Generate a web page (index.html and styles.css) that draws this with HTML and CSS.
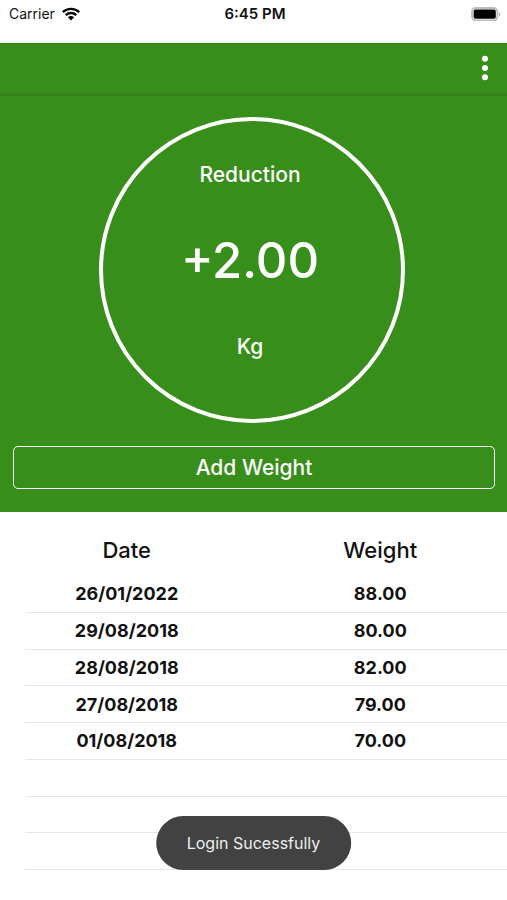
FILE: index.html
```html
<!DOCTYPE html>
<html lang="en">
<head>
<meta charset="utf-8">
<meta name="viewport" content="width=device-width, initial-scale=1">
<title>Weight</title>
<link rel="stylesheet" href="styles.css">
</head>
<body>
<header class="status">
  <div class="carrier">
    <span>Carrier</span>
    <svg class="wifi" viewBox="0 0 18 14" aria-hidden="true">
      <path d="M.8 5.1C5.3.8 12.7.8 17.2 5.1M3.7 8.1c3-2.8 7.6-2.8 10.6 0" fill="none" stroke="#000" stroke-width="2.3"/>
      <path d="M5.9 10.2c1.8-1.6 4.4-1.6 6.2 0L9 13.4z"/>
    </svg>
  </div>
  <time>6:45 PM</time>
  <svg class="battery" viewBox="0 0 30 14" aria-hidden="true">
    <rect x="1" y="1" width="25.4" height="12.4" rx="3.8" fill="#fff" stroke="#bcbcbc" stroke-width="1.8"/>
    <rect x="2.6" y="2.6" width="22.2" height="9.2" rx="1.8"/>
    <path d="M27.8 5.2c2.3.7 2.3 3.3 0 4z" fill="#bcbcbc"/>
  </svg>
</header>
<nav class="toolbar">
  <button class="more" type="button" aria-label="More options">
    <svg viewBox="0 0 8 26" aria-hidden="true"><circle cx="4" cy="3.7" r="3"/><circle cx="4" cy="13" r="3"/><circle cx="4" cy="22.3" r="3"/></svg>
  </button>
</nav>
<main>
  <section class="summary">
    <div class="gauge">
      <span class="label">Reduction</span>
      <strong class="value">+2.00</strong>
      <span class="label">Kg</span>
    </div>
    <button class="add" type="button">Add Weight</button>
  </section>
  <table class="log">
    <thead><tr><th>Date</th><th>Weight</th></tr></thead>
    <tbody>
      <tr><td>26/01/2022</td><td>88.00</td></tr>
      <tr><td>29/08/2018</td><td>80.00</td></tr>
      <tr><td>28/08/2018</td><td>82.00</td></tr>
      <tr><td>27/08/2018</td><td>79.00</td></tr>
      <tr><td>01/08/2018</td><td>70.00</td></tr>
      <tr><td></td><td></td></tr>
      <tr><td></td><td></td></tr>
      <tr><td></td><td></td></tr>
    </tbody>
  </table>
</main>
<div class="toast" role="status">Login Sucessfully</div>
</body>
</html>
```
FILE: styles.css
```css
* {
  box-sizing: border-box;
}

body {
  margin: 0;
  min-height: 100vh;
  background: #fff;
  color: #111;
  font-family: Inter, "Liberation Sans", sans-serif;
}

button {
  font: inherit;
  color: inherit;
  background: none;
  border: 0;
  cursor: pointer;
}

.status {
  display: grid;
  grid-template-columns: 1fr auto 1fr;
  align-items: center;
  height: 43px;
  padding: 0 6px 16px 9px;
  font-size: 14px;
}

.status time {
  font-size: 15px;
  font-weight: 600;
}

.carrier {
  display: flex;
  align-items: center;
  gap: 7px;
}

.wifi {
  width: 18px;
  height: 14px;
}

.battery {
  width: 30px;
  height: 14px;
  justify-self: end;
}

.toolbar {
  display: flex;
  justify-content: flex-end;
  align-items: center;
  height: 53px;
  padding: 0 14px 4px;
  background: linear-gradient(#388e1a, #317b17) 0 100% / 100% 4px no-repeat #388e1a;
  color: #fff;
}

.more {
  display: flex;
  padding: 4px;
}

.more svg {
  width: 8px;
  height: 26px;
  fill: currentColor;
}

.summary {
  display: flex;
  flex-direction: column;
  align-items: center;
  gap: 23px;
  padding: 21px 12px 23px 13px;
  background: #388e1a;
  color: #fff;
}

.gauge {
  display: flex;
  flex-direction: column;
  align-items: center;
  justify-content: space-between;
  width: 306px;
  max-width: 100%;
  aspect-ratio: 1;
  margin-right: 4px;
  padding: 42px 4px 60px 0;
  border: 4px solid #fff;
  border-radius: 50%;
}

.label {
  font-size: 21px;
  line-height: 24px;
  font-weight: 500;
}

.value {
  font-size: 49px;
  line-height: 60px;
  font-weight: 500;
}

.add {
  width: 100%;
  height: 43px;
  border: 1px solid #fff;
  border-radius: 5px;
  font-size: 21px;
  font-weight: 500;
}

.log {
  width: 100%;
  height: 358px;
  table-layout: fixed;
  border-collapse: collapse;
  text-align: center;
}

.log th {
  height: 64px;
  padding: 12px 0 0;
  font-size: 22px;
  font-weight: 500;
}

.log td {
  height: 36px;
  padding: 0;
  font-size: 18px;
  line-height: 24px;
  font-weight: 700;
  background: linear-gradient(#e6e6e6, #e6e6e6) 0 100% / 100% 1px no-repeat;
}

.log td:first-child {
  background-position: 25px 100%;
}

.toast {
  position: fixed;
  bottom: 30px;
  left: 50%;
  transform: translateX(-50%);
  padding: 15px 31px;
  border-radius: 28px;
  background: #424242;
  color: #eee;
  font-size: 16px;
  line-height: 24px;
  white-space: nowrap;
}
```
